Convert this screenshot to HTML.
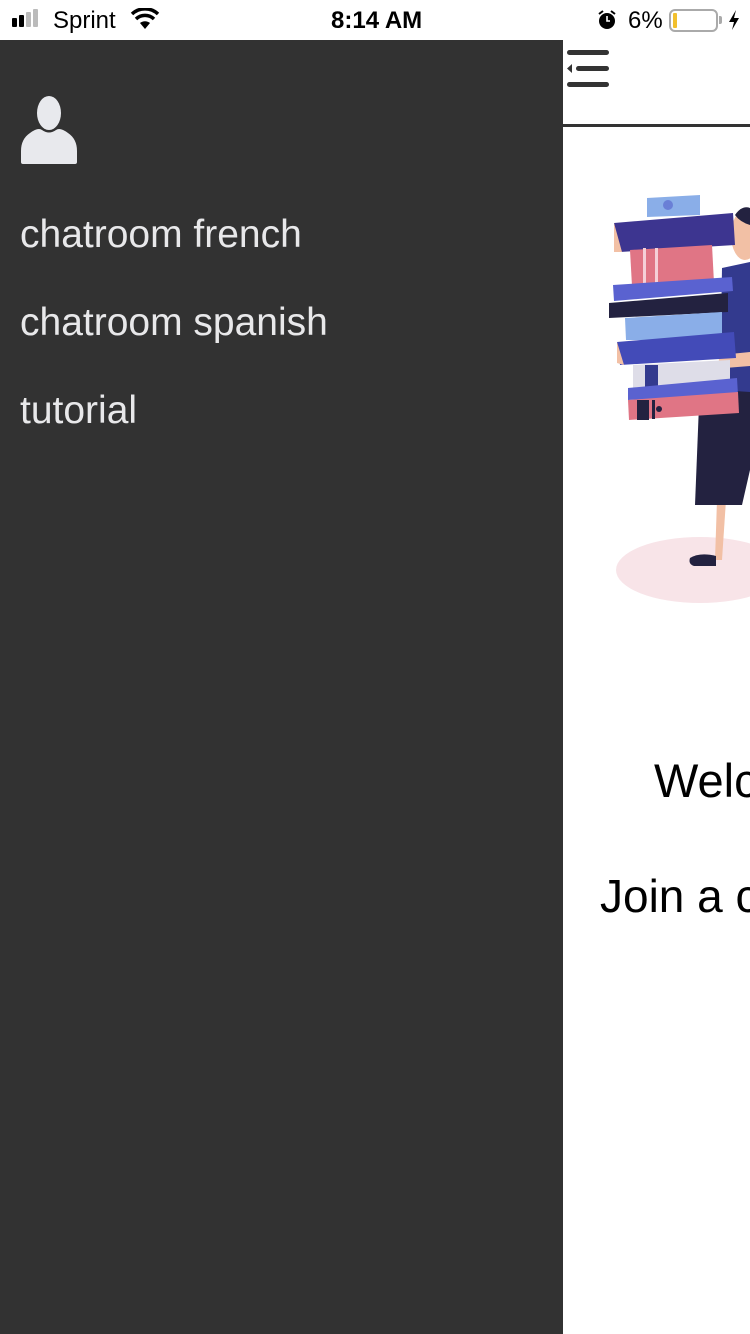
<!DOCTYPE html>
<html><head><meta charset="utf-8"><style>
*{margin:0;padding:0;box-sizing:border-box}
html{overflow:hidden;width:750px;height:1334px}
body{width:750px;height:1334px;position:relative;overflow:hidden;background:#fff;font-family:"Liberation Sans",sans-serif}
.t{position:absolute;white-space:nowrap;line-height:1}
</style></head><body>
<div style="position:absolute;left:12px;top:18px;width:5px;height:9px;background:#000;border-radius:1px"></div>
<div style="position:absolute;left:19px;top:15px;width:5px;height:12px;background:#000;border-radius:1px"></div>
<div style="position:absolute;left:26px;top:12px;width:5px;height:15px;background:#bbb;border-radius:1px"></div>
<div style="position:absolute;left:33px;top:9px;width:5px;height:18px;background:#bbb;border-radius:1px"></div>
<div class="t" style="left:53px;top:9px;font-size:24px;color:#000">Sprint</div>
<svg style="position:absolute;left:130px;top:8px" width="30" height="22" viewBox="0 0 30 22"><path d="M15 21 L10 15 A8 8 0 0 1 20 15 Z" fill="#000"/><path d="M6 11 A13 13 0 0 1 24 11" stroke="#000" stroke-width="3.5" fill="none"/><path d="M2 6 A19 19 0 0 1 28 6" stroke="#000" stroke-width="3.5" fill="none"/></svg>
<div class="t" style="left:331px;top:9px;font-size:24px;color:#000;font-weight:bold">8:14 AM</div>
<svg style="position:absolute;left:596px;top:9px" width="22" height="22" viewBox="0 0 22 22"><circle cx="11" cy="12" r="8" fill="#000"/><path d="M11 7v5h3" stroke="#fff" stroke-width="1.6" fill="none"/><path d="M3 5l4-3M19 5l-4-3" stroke="#000" stroke-width="2"/></svg>
<div class="t" style="left:628px;top:9px;font-size:24px;color:#000">6%</div>
<div style="position:absolute;left:669px;top:9px;width:49px;height:23px;border:2px solid #aaa;border-radius:6px"></div>
<div style="position:absolute;left:673px;top:13px;width:4px;height:15px;background:#f2c02e;border-radius:1px"></div>
<div style="position:absolute;left:719px;top:16px;width:3px;height:8px;background:#aaa;border-radius:0 2px 2px 0"></div>
<svg style="position:absolute;left:727px;top:9px" width="14" height="22" viewBox="0 0 14 22"><path d="M9 1 L2 13 H7 L5 21 L12 9 H7 Z" fill="#000"/></svg>

<div style="position:absolute;left:563px;top:40px;width:187px;height:1294px;overflow:hidden">
<svg style="position:absolute;left:0;top:5px" width="50" height="45"><rect x="4" y="5" width="42" height="5" rx="2.5" fill="#333"/><rect x="13" y="21" width="33" height="5" rx="2.5" fill="#333"/><rect x="4" y="37" width="42" height="5" rx="2.5" fill="#333"/><path d="M4 23.5 L9 19 V28 Z" fill="#333"/></svg>
<div style="position:absolute;left:0;top:84px;width:187px;height:3px;background:#333"></div>
<svg style="position:absolute;left:-563px;top:-40px" width="750" height="1334">
<ellipse cx="700" cy="570" rx="84" ry="33" fill="#f8e4e8"/>
<path d="M717 500 L726 500 L722 560 L715 560 Z" fill="#f2c0a5"/>
<path d="M690 558 Q700 552 716 556 L716 566 L694 566 Q688 564 690 558Z" fill="#232240"/>
<path d="M700 380 L750 380 L750 470 L742 505 L695 505 Z" fill="#232240"/>
<ellipse cx="745" cy="235" rx="14" ry="25" fill="#f2c0a5"/>
<path d="M735 215 Q742 205 750 208 L750 225 Q740 222 735 215Z" fill="#232240"/>
<path d="M722 268 L750 262 L750 392 L720 390 Z" fill="#333a8e"/>
<path d="M720 355 L750 352 L750 366 L725 368 Q716 364 720 355Z" fill="#f2c0a5"/>
<path d="M647 198 L700 195 L700 215 L647 217 Z" fill="#8aaee8"/>
<circle cx="668" cy="205" r="5" fill="#6a7fd6"/>
<path d="M614 223 L733 213 L735 245 L620 252 Z" fill="#3d3590"/>
<path d="M614 223 L622 252 L614 252 Z" fill="#f2c0a5"/>
<path d="M630 250 L712 245 L714 283 L632 286 Z" fill="#e07585"/>
<rect x="643" y="248" width="3" height="36" fill="#f5d0d8"/><rect x="655" y="248" width="3" height="36" fill="#f5d0d8"/>
<path d="M613 285 L732 277 L733 291 L614 301 Z" fill="#5a62d0"/>
<path d="M609 303 L728 293 L728 312 L609 318 Z" fill="#232240"/>
<path d="M625 318 L722 312 L722 340 L626 340 Z" fill="#8aaee8"/>
<path d="M617 342 L734 332 L736 358 L620 365 Z" fill="#434bb8"/>
<path d="M617 342 L624 365 L617 363 Z" fill="#f2c0a5"/>
<path d="M633 365 L730 360 L730 384 L633 388 Z" fill="#dedde8"/>
<rect x="645" y="365" width="13" height="22" fill="#333a8e"/>
<path d="M628 388 L737 378 L738 395 L628 400 Z" fill="#5a62d0"/>
<path d="M628 400 L738 392 L739 413 L629 420 Z" fill="#e07585"/>
<rect x="637" y="400" width="12" height="20" fill="#232240"/><rect x="652" y="400" width="3" height="19" fill="#232240"/>
<circle cx="659" cy="409" r="3" fill="#232240"/>
</svg>
<div class="t" style="left:91px;top:717px;font-size:47px;color:#000">Welcome</div>
<div class="t" style="left:37px;top:833px;font-size:46px;color:#000">Join a chatroom</div>
</div>

<div style="position:absolute;left:0;top:40px;width:563px;height:1294px;background:#323232">
<svg style="position:absolute;left:20px;top:55px" width="58" height="70" viewBox="0 0 58 70"><ellipse cx="29" cy="18" rx="12" ry="17" fill="#e8e9ed"/><path d="M10 38 Q18 32 22 35 Q29 40 36 35 Q40 32 48 38 Q57 44 57 56 L57 67 Q57 69 55 69 L3 69 Q1 69 1 67 L1 56 Q1 44 10 38Z" fill="#e8e9ed"/></svg>
<div class="t" style="left:20px;top:175px;font-size:39px;color:#e8e8ea">chatroom french</div>
<div class="t" style="left:20px;top:263px;font-size:39px;color:#e8e8ea">chatroom spanish</div>
<div class="t" style="left:20px;top:351px;font-size:39px;color:#e8e8ea">tutorial</div>
</div>
</body></html>
